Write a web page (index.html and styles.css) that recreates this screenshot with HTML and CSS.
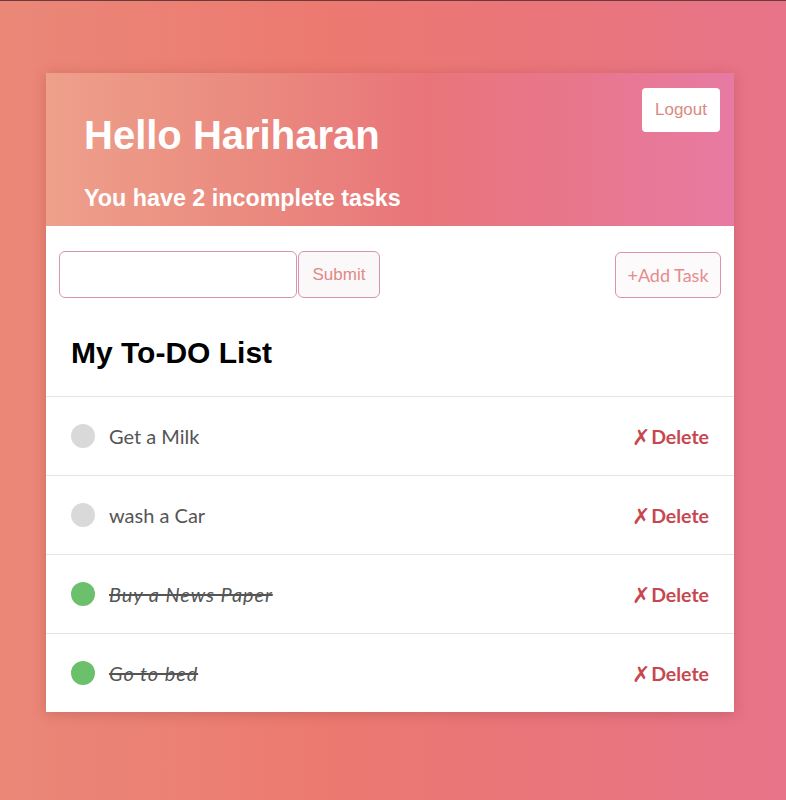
FILE: index.html
```html
<!DOCTYPE html>
<html>
<head>
<meta charset="utf-8">
<link rel="stylesheet" href="styles.css">
</head>
<body>
<div class="page">
  <div class="card">
    <header class="head">
      <button class="logout">Logout</button>
      <h1 class="hello">Hello Hariharan</h1>
      <p class="count">You have 2 incomplete tasks</p>
    </header>
    <div class="toolbar">
      <div class="form">
        <input class="field" type="text">
        <button class="submit">Submit</button>
      </div>
      <button class="add">+Add Task</button>
    </div>
    <h2 class="title">My To-DO List</h2>
    <ul class="list">
      <li class="item"><span class="dot"></span><span class="text">Get a Milk</span><span class="del"><span class="x">✗</span>Delete</span></li>
      <li class="item"><span class="dot"></span><span class="text">wash a Car</span><span class="del"><span class="x">✗</span>Delete</span></li>
      <li class="item done"><span class="dot"></span><span class="text">Buy a News Paper</span><span class="del"><span class="x">✗</span>Delete</span></li>
      <li class="item done"><span class="dot"></span><span class="text">Go to bed</span><span class="del"><span class="x">✗</span>Delete</span></li>
    </ul>
  </div>
</div>
</body>
</html>
```
FILE: styles.css
```css
html, body { margin: 0; padding: 0; height: 100%; }
body {
  border-top: 1px solid #6a3a3c;
  box-sizing: border-box;
  background: linear-gradient(90deg, #ea8878 0%, #ec7a70 40%, #ea7679 65%, #e77489 100%);
  font-family: "Liberation Sans", Arial, sans-serif;
}
.page { padding: 72px 52px 0 46px; }
.card {
  width: 688px;
  background: #fff;
  box-shadow: 0 2px 12px rgba(120, 40, 40, 0.25);
}
.head {
  position: relative;
  height: 153px;
  box-sizing: border-box;
  padding: 37px 38px 0 38px;
  background: linear-gradient(90deg, #eea08b 0%, #ea8a7f 30%, #e9757a 55%, #e8778f 80%, #e77aa2 100%);
  color: #fff;
}
.hello { margin: 0; font-size: 40px; font-weight: bold; line-height: 50px; }
.count { margin: 23px 0 0; font-size: 23.3px; font-weight: bold; line-height: 30px; }
.logout {
  position: absolute; top: 15px; right: 14px;
  width: 78px; height: 44px;
  background: #fff; border: none; border-radius: 4px;
  color: #d98a80; font-family: "Liberation Sans", Arial, sans-serif; font-size: 17px;
}
.toolbar {
  display: flex; justify-content: space-between; align-items: center;
  padding: 25px 13px 0 13px;
}
.form { display: flex; }
.field {
  width: 238px; height: 47px; box-sizing: border-box;
  border: 1.5px solid #d893b3; border-radius: 6px; margin: 0; padding: 0 8px;
}
.submit {
  width: 82px; height: 47px; box-sizing: border-box;
  border: 1.5px solid #d893b3; border-radius: 6px; background: #fbf8f9;
  color: #df8a86; font-family: "Liberation Sans", Arial, sans-serif; font-size: 17px; margin: 0 0 0 1px;
}
.add {
  width: 106px; height: 46px; box-sizing: border-box;
  border: 1.5px solid #dc93a6; border-radius: 6px; background: #fdfafb;
  color: #e58c8c; font-family: Lato, "Open Sans", sans-serif; font-size: 18px; padding: 0;
}
.title {
  margin: 0; padding: 39px 25px 0; height: 99px; box-sizing: border-box;
  font-size: 30px; font-weight: bold; color: #000; line-height: 32px;
  border-bottom: 1px solid #e4e4e4;
}
.list { list-style: none; margin: 0; padding: 0; }
.item {
  display: flex; align-items: center; height: 79px; box-sizing: border-box;
  padding: 0 25px;
  border-bottom: 1px solid #e4e4e4;
  font-family: Lato, "Open Sans", sans-serif;
}
.item:last-child { border-bottom: none; height: 78px; }
.dot { width: 24px; height: 24px; border-radius: 50%; background: #d9d9d9; flex: none; }
.done .dot { background: #6cc06c; }
.text { margin-left: 14px; font-size: 20px; color: #555; flex: 1; }
.done .text { font-style: italic; text-decoration: line-through; color: #555; letter-spacing: 0.9px; }
.del { color: #c8474f; font-weight: bold; font-size: 19.5px; display: flex; align-items: center; }
.x { font-size: 22px; font-weight: normal; margin-right: 1px; }
```
